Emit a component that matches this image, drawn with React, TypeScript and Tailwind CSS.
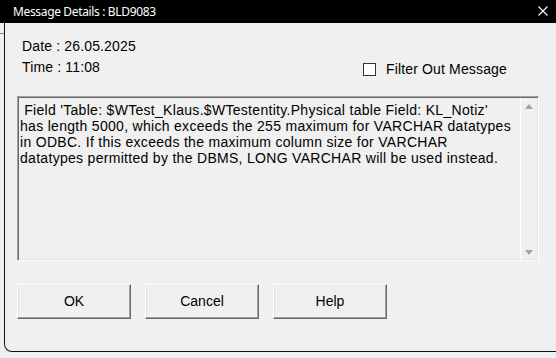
import React from "react";

function Button({ label }: { label: string }) {
  return (
    <button
      className="w-[114px] h-[35px] bg-[#f0f0f0] border border-t-white border-l-white border-r-[#696969] border-b-[#696969] shadow-[inset_-1px_-1px_0_#a0a0a0,inset_1px_1px_0_#e3e3e3] text-[14px] text-black flex items-center justify-center"
    >
      {label}
    </button>
  );
}

export default function App() {
  return (
    <div className="w-[556px] h-[358px] bg-[#f0f0f0] overflow-hidden flex flex-col font-['Liberation_Sans',Arial,sans-serif] text-black">
      {/* Title bar */}
      <div className="h-[23px] bg-black flex items-center justify-between pl-[13px] pr-[8px] shrink-0">
        <span className="text-white text-[12px] leading-none font-['Noto_Sans',sans-serif] tracking-[-0.35px]">
          Message Details : BLD9083
        </span>
        <svg width="10" height="10" viewBox="0 0 10 10" className="mb-[2px]">
          <path d="M0.5 0.5 L9.5 9.5 M9.5 0.5 L0.5 9.5" stroke="#ffffff" strokeWidth="1.1" />
        </svg>
      </div>

      <div className="flex h-[329px] shrink-0">
        {/* background strip left */}
        <div className="w-[4px] shrink-0 flex flex-col">
          <div className="h-[11px] border-b border-[#8a8a8a]"></div>
        </div>
        {/* window body */}
        <div className="flex-1 border-l border-b border-[#111111] rounded-bl-[8px] flex flex-col pl-[12px]">
          <div className="pl-[5px] pt-[13px] text-[14px] leading-[21px] tracking-[0.15px]">
            <div>Date : 26.05.2025</div>
            <div className="flex">
              <div className="w-[341px]">Time : 11:08</div>
              <div className="flex items-center mt-[2px]">
                <div className="w-[13px] h-[13px] bg-white border border-[#333333]"></div>
                <span className="ml-[10px]">Filter Out Message</span>
              </div>
            </div>
          </div>

          {/* text box */}
          <div className="mt-[16px] w-[522px] h-[165px] border border-t-[#a0a0a0] border-l-[#a0a0a0] border-r-white border-b-white shadow-[inset_1px_1px_0_#696969,inset_-1px_-1px_0_#e3e3e3] flex">
            <div className="flex-1 pl-[2px] pt-[5px] text-[14px] leading-[16px] tracking-[0.3px] whitespace-pre-wrap">
              {" Field 'Table: $WTest_Klaus.$WTestentity.Physical table Field: KL_Notiz'\nhas length 5000, which exceeds the 255 maximum for VARCHAR datatypes\nin ODBC. If this exceeds the maximum column size for VARCHAR\ndatatypes permitted by the DBMS, LONG VARCHAR will be used instead."}
            </div>
            <div className="w-[17px] border-l border-white my-[1px] mr-[1px] flex flex-col items-center justify-between pt-[6px] pb-[4px]">
              <svg width="8" height="5" viewBox="0 0 8 5">
                <path d="M0 5 L4 0 L8 5 Z" fill="#a3a3a3" />
              </svg>
              <svg width="8" height="5" viewBox="0 0 8 5">
                <path d="M0 0 L4 5 L8 0 Z" fill="#a3a3a3" />
              </svg>
            </div>
          </div>

          {/* buttons */}
          <div className="mt-[23px] flex gap-[14px]">
            <Button label="OK" />
            <Button label="Cancel" />
            <Button label="Help" />
          </div>
        </div>
      </div>
    </div>
  );
}
